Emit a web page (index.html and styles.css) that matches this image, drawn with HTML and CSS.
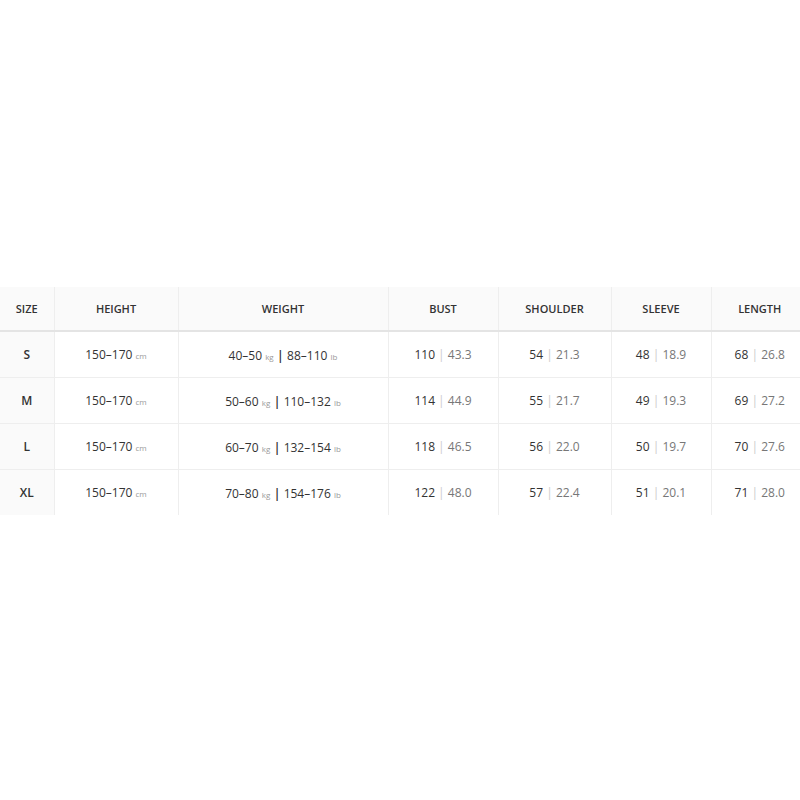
FILE: index.html
```html
<!DOCTYPE html>
<html>
<head>
<meta charset="utf-8">
<link rel="stylesheet" href="styles.css">
</head>
<body>
<div class="wrap">
<table class="size-table">
  <colgroup>
    <col class="c-size"><col class="c-height"><col class="c-weight"><col class="c-bust"><col class="c-shoulder"><col class="c-sleeve"><col class="c-length">
  </colgroup>
  <thead>
    <tr><th>SIZE</th><th>HEIGHT</th><th>WEIGHT</th><th>BUST</th><th>SHOULDER</th><th>SLEEVE</th><th>LENGTH</th></tr>
  </thead>
  <tbody>
    <tr>
      <td class="size">S</td>
      <td>150–170 <span class="unit">cm</span></td>
      <td>40–50 <span class="unit">kg</span> <span class="bar">|</span> 88–110 <span class="unit">lb</span></td>
      <td>110 <span class="sep">|</span> <span class="alt">43.3</span></td>
      <td>54 <span class="sep">|</span> <span class="alt">21.3</span></td>
      <td>48 <span class="sep">|</span> <span class="alt">18.9</span></td>
      <td>68 <span class="sep">|</span> <span class="alt">26.8</span></td>
    </tr>
    <tr>
      <td class="size">M</td>
      <td>150–170 <span class="unit">cm</span></td>
      <td>50–60 <span class="unit">kg</span> <span class="bar">|</span> 110–132 <span class="unit">lb</span></td>
      <td>114 <span class="sep">|</span> <span class="alt">44.9</span></td>
      <td>55 <span class="sep">|</span> <span class="alt">21.7</span></td>
      <td>49 <span class="sep">|</span> <span class="alt">19.3</span></td>
      <td>69 <span class="sep">|</span> <span class="alt">27.2</span></td>
    </tr>
    <tr>
      <td class="size">L</td>
      <td>150–170 <span class="unit">cm</span></td>
      <td>60–70 <span class="unit">kg</span> <span class="bar">|</span> 132–154 <span class="unit">lb</span></td>
      <td>118 <span class="sep">|</span> <span class="alt">46.5</span></td>
      <td>56 <span class="sep">|</span> <span class="alt">22.0</span></td>
      <td>50 <span class="sep">|</span> <span class="alt">19.7</span></td>
      <td>70 <span class="sep">|</span> <span class="alt">27.6</span></td>
    </tr>
    <tr>
      <td class="size">XL</td>
      <td>150–170 <span class="unit">cm</span></td>
      <td>70–80 <span class="unit">kg</span> <span class="bar">|</span> 154–176 <span class="unit">lb</span></td>
      <td>122 <span class="sep">|</span> <span class="alt">48.0</span></td>
      <td>57 <span class="sep">|</span> <span class="alt">22.4</span></td>
      <td>51 <span class="sep">|</span> <span class="alt">20.1</span></td>
      <td>71 <span class="sep">|</span> <span class="alt">28.0</span></td>
    </tr>
  </tbody>
</table>
</div>
</body>
</html>
```

FILE: styles.css
```css
html, body {
  margin: 0;
  padding: 0;
  background: #ffffff;
}
body {
  font-family: "Open Sans", "Noto Sans", sans-serif;
  color: #333;
  height: 800px;
  display: flex;
  align-items: center;
  overflow: hidden;
}
.wrap {
  width: 800px;
  overflow: hidden;
  margin-top: 2px;
}
.size-table {
  width: 808px;
  border-collapse: collapse;
  table-layout: fixed;
}
.c-size { width: 54px; }
.c-height { width: 124px; }
.c-weight { width: 210px; }
.c-bust { width: 110px; }
.c-shoulder { width: 113px; }
.c-sleeve { width: 100px; }
.c-length { width: 97px; }

.size-table th {
  background: #fafafa;
  font-size: 11px;
  font-weight: 600;
  color: #333;
  height: 43px;
  padding: 0;
  text-align: center;
  border-left: 1px solid #eee;
  border-bottom: 2px solid #e4e4e4;
}
.size-table th:first-child,
.size-table td:first-child {
  border-left: none;
}
.size-table td {
  font-size: 12px;
  color: #333;
  height: 45px;
  padding: 0;
  text-align: center;
  border-left: 1px solid #eee;
  border-bottom: 1px solid #eee;
  white-space: nowrap;
}
.size-table tbody tr:last-child td {
  border-bottom: none;
}
.size-table td.size {
  background: #fafafa;
  font-weight: 600;
  font-size: 12px;
}
.unit {
  font-size: 8px;
  color: #999;
}
.bar {
  color: #333;
  font-weight: 600;
  font-size: 13px;
}
.sep {
  color: #ccc;
}
.alt {
  color: #777;
}
```
